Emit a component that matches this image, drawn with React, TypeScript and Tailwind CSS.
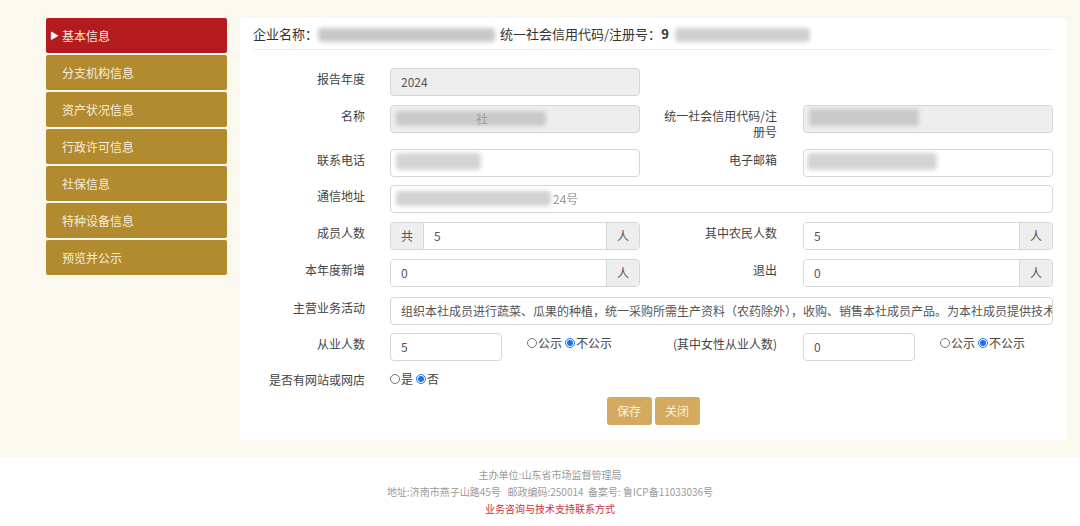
import React from 'react';

const menu = ['基本信息', '分支机构信息', '资产状况信息', '行政许可信息', '社保信息', '特种设备信息', '预览并公示'];

const font = { fontFamily: '"Noto Sans CJK SC", "Noto Sans", sans-serif' };

function Label({ children, w = 'w-[125px]' }: { children: React.ReactNode; w?: string }) {
  return (
    <div className={`${w} shrink-0 text-right text-[12px] leading-[16px] pt-[3px] text-[#444]`}>{children}</div>
  );
}

function Blur({ className }: { className: string }) {
  return <div className={`absolute bg-[#c9c9c9] blur-[2px] rounded-sm ${className}`} />;
}

function Field({
  value,
  readOnly,
  w = 'w-[250px]',
  children,
}: {
  value?: string;
  readOnly?: boolean;
  w?: string;
  children?: React.ReactNode;
}) {
  return (
    <div
      className={`${w} relative h-[28px] shrink-0 rounded-[4px] border border-[#d6d6d6] ${
        readOnly ? 'bg-[#eeeeee]' : 'bg-white'
      } flex items-center px-[10px] text-[12px] text-[#555] overflow-hidden whitespace-nowrap`}
    >
      {value}
      {children}
    </div>
  );
}

function UnitField({ value, prefix }: { value: string; prefix?: string }) {
  return (
    <div className="w-[250px] h-[28px] shrink-0 flex rounded-[4px] border border-[#d6d6d6] overflow-hidden text-[12px] text-[#555]">
      {prefix && (
        <div className="w-[33px] bg-[#eeeeee] border-r border-[#d6d6d6] flex items-center justify-center">{prefix}</div>
      )}
      <div className="flex-1 bg-white flex items-center px-[10px]">{value}</div>
      <div className="w-[33px] bg-[#eeeeee] border-l border-[#d6d6d6] flex items-center justify-center">人</div>
    </div>
  );
}

function Radios({ a, b, name }: { a: string; b: string; name: string }) {
  return (
    <div className="flex items-center text-[12px] text-[#444] pt-[2px] leading-[16px]">
      <label className="flex items-center">
        <input type="radio" name={name} className="w-[10px] h-[10px] m-0 mr-[1px]" />
        {a}
      </label>
      <label className="flex items-center ml-[3px]">
        <input type="radio" name={name} defaultChecked className="w-[10px] h-[10px] m-0 mr-[1px] accent-[#1a73e8]" />
        {b}
      </label>
    </div>
  );
}

export default function App() {
  return (
    <div className="w-[1080px] h-[526px] bg-[#fbf8ef] overflow-hidden flex flex-col" style={font}>
      <div className="flex items-start pt-[18px] pl-[46px] h-[457px]">
        {/* sidebar */}
        <div className="w-[181px] flex flex-col gap-[2px]">
          {menu.map((m, i) => (
            <div
              key={m}
              className={`h-[35px] rounded-[2px] flex items-center pl-[16px] text-[12px] relative text-[#f6edd8] ${
                i === 0 ? 'bg-[#b31b1e]' : 'bg-[#b28a2f]'
              }`}
            >
              {i === 0 && <span className="absolute left-[4px] text-[9px] text-white">▶</span>}
              {m}
            </div>
          ))}
        </div>

        {/* main panel */}
        <div className="ml-[13px] w-[826px] h-[422px] bg-white rounded-[4px]">
          <div className="mx-[13px] h-[32px] border-b border-[#eeeeee] flex items-center text-[13px] text-[#333] relative">
            <span>企业名称：</span>
            <Blur className="left-[65px] top-[10px] w-[177px] h-[14px]" />
            <span className="ml-[182px]">统一社会信用代码/注册号：</span>
            <span className="font-bold">9</span>
            <Blur className="left-[422px] top-[10px] w-[135px] h-[14px] bg-[#d0d0d0]" />
          </div>

          <div className="flex flex-col gap-[9px] pt-[18px]">
            <div className="flex">
              <Label>报告年度</Label>
              <div className="ml-[25px]">
                <Field readOnly value="2024" />
              </div>
            </div>

            <div className="flex">
              <Label>名称</Label>
              <div className="ml-[25px]">
                <Field readOnly>
                  <Blur className="left-[5px] top-[5px] w-[150px] h-[15px]" />
                  <span className="ml-[75px] text-[#999] blur-[0.6px]">社</span>
                </Field>
              </div>
              <Label w="w-[137px]">
                统一社会信用代码/注
                <br />
                册号
              </Label>
              <div className="ml-[26px]">
                <Field readOnly>
                  <Blur className="left-[5px] top-[3px] w-[110px] h-[17px]" />
                </Field>
              </div>
            </div>

            <div className="flex">
              <Label>联系电话</Label>
              <div className="ml-[25px]">
                <Field>
                  <Blur className="left-[5px] top-[3px] w-[85px] h-[17px] bg-[#d4d4d4]" />
                </Field>
              </div>
              <Label w="w-[137px]">电子邮箱</Label>
              <div className="ml-[26px]">
                <Field>
                  <Blur className="left-[3px] top-[3px] w-[130px] h-[17px] bg-[#d4d4d4]" />
                </Field>
              </div>
            </div>

            <div className="flex -mt-[1px]">
              <Label>通信地址</Label>
              <div className="ml-[25px]">
                <Field w="w-[663px]">
                  <Blur className="left-[5px] top-[5px] w-[155px] h-[15px] bg-[#d2d2d2]" />
                  <span className="ml-[152px] text-[#999] blur-[0.6px]">24号</span>
                </Field>
              </div>
            </div>

            <div className="flex">
              <Label>成员人数</Label>
              <div className="ml-[25px]">
                <UnitField prefix="共" value="5" />
              </div>
              <Label w="w-[137px]">其中农民人数</Label>
              <div className="ml-[26px]">
                <UnitField value="5" />
              </div>
            </div>

            <div className="flex">
              <Label>本年度新增</Label>
              <div className="ml-[25px]">
                <UnitField value="0" />
              </div>
              <Label w="w-[137px]">退出</Label>
              <div className="ml-[26px]">
                <UnitField value="0" />
              </div>
            </div>

            <div className="flex mt-[1px]">
              <Label>主营业务活动</Label>
              <div className="ml-[25px]">
                <Field
                  w="w-[663px]"
                  value="组织本社成员进行蔬菜、瓜果的种植，统一采购所需生产资料（农药除外），收购、销售本社成员产品。为本社成员提供技术服务"
                />
              </div>
            </div>

            <div className="flex -mt-[1px]">
              <Label>从业人数</Label>
              <div className="ml-[25px]">
                <Field w="w-[112px]" value="5" />
              </div>
              <div className="w-[138px] shrink-0 pl-[25px]">
                <Radios name="a" a="公示" b="不公示" />
              </div>
              <Label w="w-[137px]">(其中女性从业人数)</Label>
              <div className="ml-[26px]">
                <Field w="w-[112px]" value="0" />
              </div>
              <div className="pl-[25px]">
                <Radios name="b" a="公示" b="不公示" />
              </div>
            </div>

            <div className="flex -mt-[1px]">
              <Label>是否有网站或网店</Label>
              <div className="ml-[25px]">
                <Radios name="c" a="是" b="否" />
              </div>
            </div>

            <div className="flex justify-center gap-[3px]">
              <button className="w-[45px] h-[28px] rounded-[3px] bg-[#d3aa5f] text-[12px] text-[#fbf1dc]">保存</button>
              <button className="w-[45px] h-[28px] rounded-[3px] bg-[#d3aa5f] text-[12px] text-[#fbf1dc]">关闭</button>
            </div>
          </div>
        </div>
      </div>

      {/* footer */}
      <div className="flex-1 bg-white flex flex-col items-center pt-[9px] pl-[20px] text-[10px] leading-[17px] text-[#9a9a9a]">
        <div>主办单位:山东省市场监督管理局</div>
        <div className="whitespace-pre">地址:济南市燕子山路45号   邮政编码:250014  备案号: 鲁ICP备11033036号</div>
        <div className="text-[#c8323a]">业务咨询与技术支持联系方式</div>
      </div>
    </div>
  );
}
